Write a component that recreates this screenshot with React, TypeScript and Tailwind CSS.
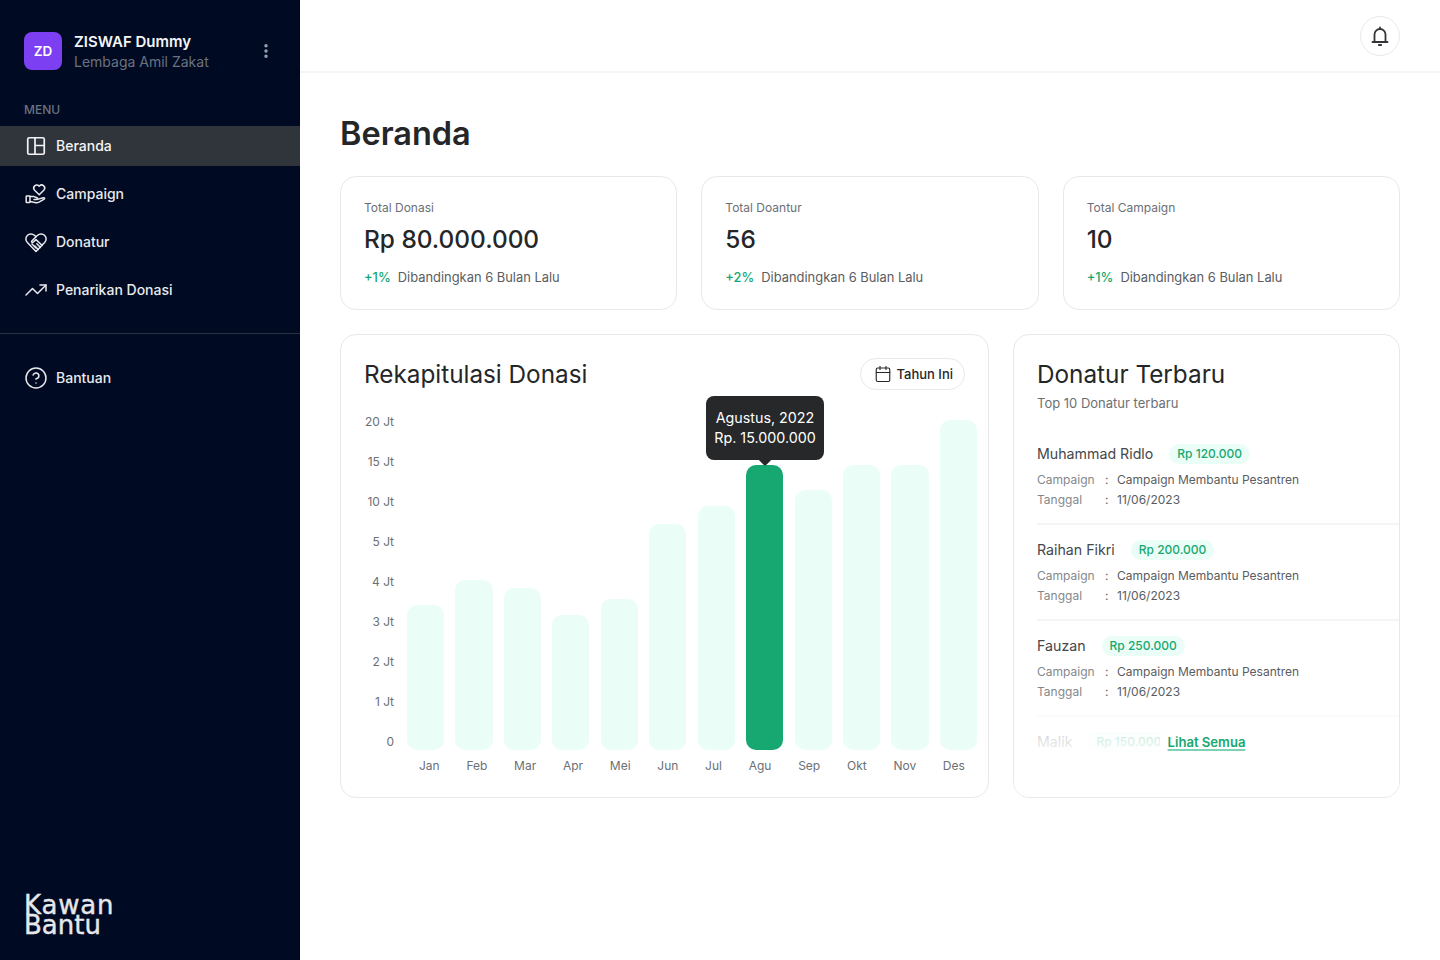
import { Calendar, CircleHelp, MoreVertical, TrendingUp } from 'lucide-react';

const months = ['Jan', 'Feb', 'Mar', 'Apr', 'Mei', 'Jun', 'Jul', 'Agu', 'Sep', 'Okt', 'Nov', 'Des'];
const bars = [145, 170, 162, 135, 151, 226, 244, 285, 260, 285, 285, 330];
const yLabels = ['20 Jt', '15 Jt', '10 Jt', '5 Jt', '4 Jt', '3 Jt', '2 Jt', '1 Jt', '0'];

const stats = [
  { label: 'Total Donasi', value: 'Rp 80.000.000', change: '+1%' },
  { label: 'Total Doantur', value: '56', change: '+2%' },
  { label: 'Total Campaign', value: '10', change: '+1%' },
];

const donors = [
  { name: 'Muhammad Ridlo', amount: 'Rp 120.000' },
  { name: 'Raihan Fikri', amount: 'Rp 200.000' },
  { name: 'Fauzan', amount: 'Rp 250.000' },
  { name: 'Malik', amount: 'Rp 150.000' },
];

function LayoutIcon() {
  return (
    <svg width="24" height="24" viewBox="0 0 24 24" fill="none" stroke="currentColor" strokeWidth="1.7">
      <rect x="3.75" y="3.75" width="16.5" height="16.5" rx="1.5" />
      <path d="M11 3.75v16.5M11 11.5h9.25" />
    </svg>
  );
}

function HandHeartIcon() {
  return (
    <svg width="24" height="24" viewBox="0 0 24 24" fill="none" stroke="currentColor" strokeWidth="1.5" strokeLinejoin="round" strokeLinecap="round">
      <path d="M15.2 12.8l-4.6-4.6a3 3 0 0 1 4.4-4.2l.2.2.2-.2a3 3 0 0 1 4.4 4.2z" />
      <rect x="2.2" y="14" width="3.8" height="6.6" rx="0.6" />
      <path d="M6 14.6h4l3 1.2c.9.4.7 1.7-.3 1.7H10" />
      <path d="M6 19.6l6 1.1c1 .2 2 0 3-.5l5.2-3c.9-.6.3-1.7-.8-1.4l-6 1.6" />
    </svg>
  );
}

function HandshakeIcon() {
  return (
    <svg width="24" height="24" viewBox="0 0 24 24" fill="none" stroke="currentColor" strokeWidth="1.5" strokeLinejoin="round" strokeLinecap="round">
      <path d="M12 21.5l-8.6-9a5 5 0 0 1 7-7.2L12 6.8l1.6-1.5a5 5 0 0 1 7 7.2z" />
      <path d="M12 6.8L7.8 11c-.8.9.5 2.1 1.3 1.3L12 9.6l6.2 5.9" />
      <path d="M16.4 17.4l-3.6-3.6M14.3 19.5l-3.4-3.4M8 14l4 4" />
    </svg>
  );
}

function BellIcon() {
  return (
    <svg width="24" height="24" viewBox="0 0 24 24" fill="none" stroke="#333538" strokeWidth="1.8" strokeLinecap="round" strokeLinejoin="round">
      <path d="M12 3.4v1.6" />
      <path d="M6.5 18V10.5a5.5 5.5 0 0 1 11 0V18" />
      <path d="M4.5 18h15" />
      <path d="M10.8 21h2.4" />
    </svg>
  );
}

function NavItem({ icon, label, active }: { icon: React.ReactNode; label: string; active?: boolean }) {
  return (
    <div className={active ? 'flex h-10 items-center gap-2 bg-[#30343b] pl-6 text-[#f3f4f6]' : 'flex h-10 items-center gap-2 pl-6 text-[#e8e9ec]'}>
      {icon}
      <span className="text-sm font-medium">{label}</span>
    </div>
  );
}

export default function App() {
  return (
    <div className="flex min-h-[960px] bg-white font-['Inter',sans-serif] text-[#252628] antialiased">
      {/* sidebar */}
      <aside className="flex w-[300px] shrink-0 flex-col bg-[#000a22]">
        <div className="flex items-start pr-[25px] pl-6 pt-8">
          <div className="flex h-[38px] w-[38px] items-center justify-center rounded-lg bg-[#7c40f2] text-[13.5px] font-semibold text-white">ZD</div>
          <div className="ml-3 flex-1">
            <p className="text-[15px] leading-5 font-semibold text-[#f3f4f6]">ZISWAF Dummy</p>
            <p className="text-sm leading-5 text-[#6b7280]">Lembaga Amil Zakat</p>
          </div>
          <div className="flex h-[38px] items-center">
            <MoreVertical size={18} strokeWidth={2.6} className="text-[#9ca3af]" />
          </div>
        </div>

        <p className="mt-[30px] pl-6 text-xs leading-4 font-medium text-[#6b7280]">MENU</p>
        <nav className="mt-2 flex flex-col gap-2">
          <NavItem icon={<LayoutIcon />} label="Beranda" active />
          <NavItem icon={<HandHeartIcon />} label="Campaign" />
          <NavItem icon={<HandshakeIcon />} label="Donatur" />
          <NavItem icon={<TrendingUp size={24} strokeWidth={1.5} />} label="Penarikan Donasi" />
        </nav>
        <div className="mt-[23px] border-t border-[#2a3040] pt-6">
          <NavItem icon={<CircleHelp size={24} strokeWidth={1.5} />} label="Bantuan" />
        </div>

        <div className="mt-auto pb-[25px] pl-6 font-['DejaVu_Sans',sans-serif] text-[26px] leading-5 text-[#e5e7eb] [-webkit-text-stroke:0.4px_#e5e7eb]">
          <p className="tracking-[0.8px]">Kawan</p>
          <p>Bantu</p>
        </div>
      </aside>

      <div className="flex flex-1 flex-col">
        {/* top bar */}
        <header className="flex h-[73px] items-center justify-end border-b-2 border-[#f3f4f6] pr-10">
          <div className="flex h-10 w-10 items-center justify-center rounded-full border border-[#e8e8e8]">
            <BellIcon />
          </div>
        </header>

        <main className="px-10 pt-[41px]">
          <h1 className="text-[32.5px] leading-10 font-semibold">Beranda</h1>

          <div className="mt-[22px] grid grid-cols-3 gap-6">
            {stats.map((s) => (
              <div key={s.label} className="h-[134px] rounded-2xl border border-[#e8e8e8] px-[23px] pt-[23px]">
                <p className="text-xs leading-4 text-[#6b7075]">{s.label}</p>
                <p className="mt-[7px] text-[24.4px] leading-8 font-medium">{s.value}</p>
                <p className="mt-[13px] flex gap-[7px] text-[12.9px] leading-5 text-[#5a5d61]">
                  <span className="font-medium text-[#16a870]">{s.change}</span>
                  Dibandingkan 6 Bulan Lalu
                </p>
              </div>
            ))}
          </div>

          <div className="mt-6 flex gap-6">
            {/* chart */}
            <section className="h-[464px] w-[649px] rounded-2xl border border-[#e8e8e8] pt-[23px] pr-[11px] pl-[23px]">
              <div className="flex h-8 items-center justify-between pr-3">
                <h2 className="text-[24.3px] leading-8 font-normal">Rekapitulasi Donasi</h2>
                <div className="flex h-8 items-center gap-[5px] rounded-full border border-[#e8e8e8] pr-[11px] pl-[13px] text-[13px] font-medium">
                  <Calendar size={18} strokeWidth={1.5} />
                  <span className="mt-px">Tahun Ini</span>
                </div>
              </div>

              <div className="relative mt-6 flex items-end">
                <div className="flex h-[336px] w-[30px] flex-col justify-between text-right text-xs leading-4 text-[#6b7075]">
                  {yLabels.map((y) => (
                    <span key={y}>{y}</span>
                  ))}
                </div>
                <div className="ml-[13px] grid h-[336px] flex-1 grid-cols-12 items-end gap-[11.4px]">
                  {bars.map((h, i) => (
                    <div
                      key={months[i]}
                      className={i === 7 ? 'rounded-[10px] bg-[#16a870]' : 'rounded-[10px] bg-[#ebfdf7]'}
                      style={{ height: h }}
                    />
                  ))}
                </div>

                {/* tooltip on Agustus */}
                <div className="absolute top-[-18px] left-[342px] flex h-16 w-[118px] flex-col items-center justify-center rounded-lg bg-[#27282a] text-[14.3px] leading-5 text-white">
                  <span>Agustus, 2022</span>
                  <span>Rp. 15.000.000</span>
                  <div className="absolute bottom-[-4px] h-2.5 w-2.5 rotate-45 rounded-[2px] bg-[#27282a]" />
                </div>
              </div>

              <div className="mt-2 ml-[55px] flex justify-between pr-3 text-xs leading-4 text-[#6b7075]">
                {months.map((m) => (
                  <span key={m}>{m}</span>
                ))}
              </div>
            </section>

            {/* recent donors */}
            <section className="relative h-[464px] flex-1 overflow-hidden rounded-2xl border border-[#e8e8e8] pt-[23px] pl-[23px]">
              <h2 className="text-[24.3px] leading-8 font-normal">Donatur Terbaru</h2>
              <p className="mt-[3px] text-[13px] leading-5 text-[#6b7075]">Top 10 Donatur terbaru</p>

              <div className="mt-6 flex flex-col gap-2">
                {donors.map((d) => (
                  <div key={d.name} className="h-[88px] shrink-0 border-b-2 border-[#f5f5f5] pt-[7px]">
                    <div className="flex items-center gap-4">
                      <span className="text-[14.2px] leading-5 font-normal text-[#45474a]">{d.name}</span>
                      <span className="rounded-full bg-[#ebfdf7] px-2 text-xs leading-5 font-medium text-[#16a870]">{d.amount}</span>
                    </div>
                    <div className="mt-[6px] grid grid-cols-[68px_12px_1fr] text-xs leading-5 text-[#5a5d61]">
                      <span className="text-[#85888c]">Campaign</span>
                      <span>:</span>
                      <span>Campaign Membantu Pesantren</span>
                      <span className="text-[#85888c]">Tanggal</span>
                      <span>:</span>
                      <span>11/06/2023</span>
                    </div>
                  </div>
                ))}
              </div>

              {/* fade over the rest of the list */}
              <div className="absolute right-0 bottom-0 left-0 flex h-[86px] justify-center bg-gradient-to-b from-white/60 via-white via-60% to-white pt-[22px]">
                <a className="h-fit bg-white px-2 text-[13.1px] leading-[18px] font-semibold text-[#16a870] underline decoration-[#7fd3b4] decoration-2 underline-offset-2">Lihat Semua</a>
              </div>
            </section>
          </div>
        </main>
      </div>
    </div>
  );
}
